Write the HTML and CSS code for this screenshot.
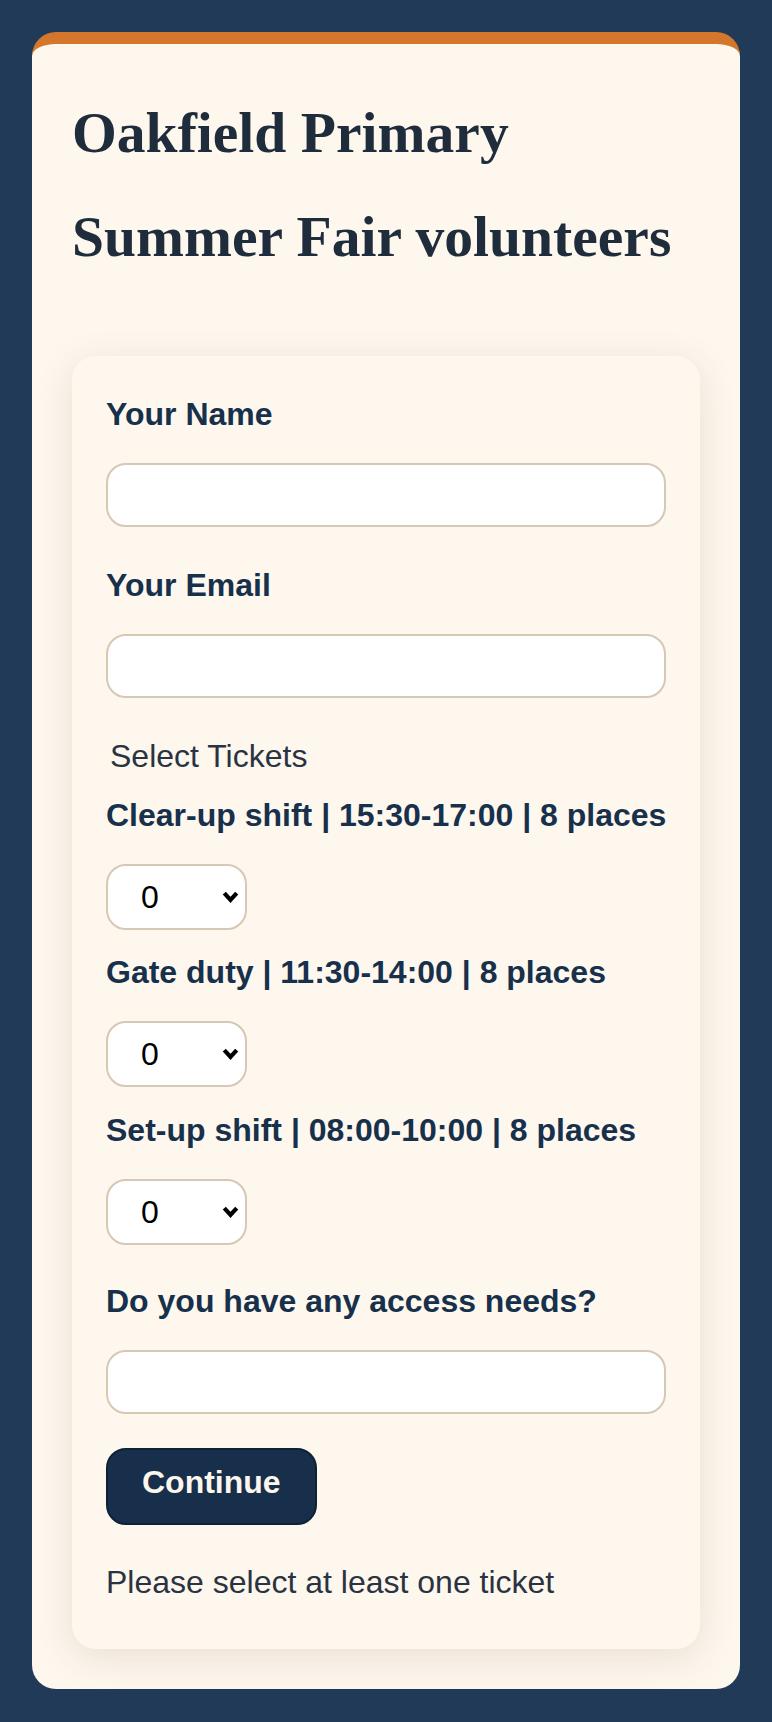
FILE: index.html
```html
<!DOCTYPE html>
<html lang="en">
<head>
<meta charset="utf-8">
<title>Oakfield Primary Summer Fair volunteers</title>
<link rel="stylesheet" href="styles.css">
</head>
<body>
<main class="page">
  <section class="card">
    <h1 class="title">Oakfield Primary Summer Fair volunteers</h1>
    <form class="form-card">
      <label class="field-label" for="name">Your Name</label>
      <input class="text-input" id="name" type="text">

      <label class="field-label" for="email">Your Email</label>
      <input class="text-input" id="email" type="email">

      <fieldset class="tickets">
        <legend class="tickets-legend">Select Tickets</legend>
        <div class="ticket-list">
          <div class="ticket">
            <label class="field-label" for="t1">Clear-up shift | 15:30-17:00 | 8 places</label>
            <div class="select-wrap">
              <select class="qty" id="t1">
                <option>0</option><option>1</option><option>2</option><option>3</option><option>4</option><option>5</option><option>6</option><option>7</option><option>8</option>
              </select>
              <svg class="chevron" viewBox="0 0 17 13" width="17" height="13" aria-hidden="true"><path d="M2.3 2.6 L8.5 9.4 L14.7 2.6"/></svg>
            </div>
          </div>
          <div class="ticket">
            <label class="field-label" for="t2">Gate duty | 11:30-14:00 | 8 places</label>
            <div class="select-wrap">
              <select class="qty" id="t2">
                <option>0</option><option>1</option><option>2</option><option>3</option><option>4</option><option>5</option><option>6</option><option>7</option><option>8</option>
              </select>
              <svg class="chevron" viewBox="0 0 17 13" width="17" height="13" aria-hidden="true"><path d="M2.3 2.6 L8.5 9.4 L14.7 2.6"/></svg>
            </div>
          </div>
          <div class="ticket">
            <label class="field-label" for="t3">Set-up shift | 08:00-10:00 | 8 places</label>
            <div class="select-wrap">
              <select class="qty" id="t3">
                <option>0</option><option>1</option><option>2</option><option>3</option><option>4</option><option>5</option><option>6</option><option>7</option><option>8</option>
              </select>
              <svg class="chevron" viewBox="0 0 17 13" width="17" height="13" aria-hidden="true"><path d="M2.3 2.6 L8.5 9.4 L14.7 2.6"/></svg>
            </div>
          </div>
        </div>
      </fieldset>

      <label class="field-label" for="access">Do you have any access needs?</label>
      <input class="text-input" id="access" type="text">

      <button class="btn" type="button">Continue</button>
      <p class="message">Please select at least one ticket</p>
    </form>
  </section>
</main>
</body>
</html>
```
FILE: styles.css
```css
html, body {
  margin: 0;
  padding: 0;
}

body {
  background: #203a57;
  font-family: "Liberation Sans", Arial, sans-serif;
  font-size: 32px;
  line-height: 51.2px;
  color: #2a3341;
}

.page {
  padding: 32px;
}

.card {
  background: #fef7ee;
  border-top: 12px solid #d4762c;
  border-radius: 24px;
  padding: 37px 40px 40px;
}

.title {
  margin: 0 0 67.6px;
  font-family: "Liberation Serif", "Times New Roman", serif;
  font-size: 57.6px;
  line-height: 103.68px;
  font-weight: 700;
  color: #1f2c3c;
}

.form-card {
  display: flex;
  flex-direction: column;
  align-items: flex-start;
  background: #fef7ee;
  border-radius: 24px;
  padding: 33px 34px 41px;
  box-shadow: 0 8px 36px rgba(90, 60, 30, 0.13);
}

.field-label {
  display: block;
  font-weight: 700;
  color: #17304b;
  margin-bottom: 23px;
  white-space: nowrap;
}

.text-input {
  box-sizing: border-box;
  align-self: stretch;
  width: 100%;
  height: 64px;
  margin: 0 0 33px;
  padding: 0 20px;
  border: 2px solid #d6c8b6;
  border-radius: 20px;
  background: #ffffff;
  font-family: "Liberation Sans", Arial, sans-serif;
  font-size: 32px;
}

.tickets {
  align-self: stretch;
  margin: 0 0 13px;
  padding: 0;
  border: 0;
  min-width: 0;
}

.tickets-legend {
  padding: 0 4px;
  font-size: 32px;
  line-height: 51.2px;
  color: #2a3341;
}

.ticket-list {
  display: flex;
  flex-direction: column;
  align-items: flex-start;
  padding-top: 7px;
}

.ticket {
  display: flex;
  flex-direction: column;
  align-items: flex-start;
}

.select-wrap {
  position: relative;
  margin: 0 0 17.5px;
}

.qty {
  display: block;
  box-sizing: border-box;
  width: 141px;
  height: 66px;
  margin: 0;
  padding: 0 33px;
  border: 2px solid #d6c8b6;
  border-radius: 20px;
  background: #ffffff;
  color: #000000;
  font-family: "Liberation Sans", Arial, sans-serif;
  font-size: 32px;
  line-height: normal;
  -webkit-appearance: none;
  appearance: none;
}

.chevron {
  position: absolute;
  right: 8px;
  top: 50%;
  transform: translateY(-50%);
  pointer-events: none;
}

.chevron path {
  fill: none;
  stroke: #000000;
  stroke-width: 4.2;
  stroke-linejoin: miter;
}

.btn {
  margin-top: 1px;
  padding: 14px 34px 22px;
  border: 2px solid #0e2135;
  border-radius: 20px;
  background: #172f4a;
  color: #fdf6ec;
  font-family: "Liberation Sans", Arial, sans-serif;
  font-size: 32px;
  font-weight: 700;
  line-height: 37px;
  cursor: pointer;
}

.message {
  margin: 32px 0 0;
  color: #2a3341;
}
```
